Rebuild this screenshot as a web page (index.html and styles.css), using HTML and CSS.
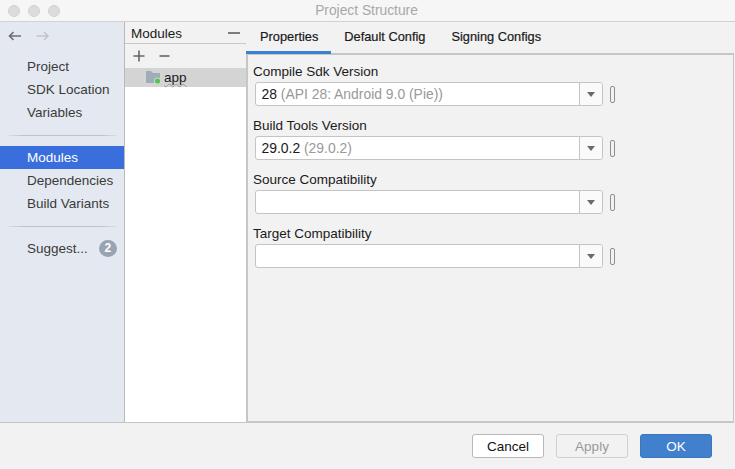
FILE: index.html
```html
<!DOCTYPE html>
<html>
<head>
<link rel="stylesheet" href="styles.css">
</head>
<body>

<div class="window">
    <div class="titlebar">
        <div class="lights"><span></span><span></span><span></span></div>
        <div class="title">Project Structure</div>
    </div>

    <div class="main">
        <div class="sidebar">
            <div class="nav-arrows">
                <svg width="14" height="12" viewBox="0 0 14 12"><path d="M13 6H1.500M5.500 2L1.500 6l4 4" fill="none" stroke="#6e6e6e" stroke-width="1.600"/></svg>
                <svg width="14" height="12" viewBox="0 0 14 12"><path d="M.5 6H12M8 2l4 4-4 4" fill="none" stroke="#c2c4c7" stroke-width="1.600"/></svg>
            </div>
            <div class="nav-item">Project</div>
            <div class="nav-item">SDK Location</div>
            <div class="nav-item">Variables</div>
            <div class="nav-sep"></div>
            <div class="nav-item selected">Modules</div>
            <div class="nav-item">Dependencies</div>
            <div class="nav-item">Build Variants</div>
            <div class="nav-sep"></div>
            <div class="nav-item suggest">Suggest...<span class="badge">2</span></div>
        </div>

        <div class="modules">
            <div class="modules-head">
                <span>Modules</span>
                <span class="minimize"></span>
            </div>
            <div class="modules-tools">
                <svg width="12" height="12" viewBox="0 0 12 12"><path d="M6 .5v11M.5 6h11" stroke="#666" stroke-width="1.600"/></svg>
                <svg width="11" height="12" viewBox="0 0 11 12"><path d="M.5 6h10" stroke="#666" stroke-width="1.600"/></svg>
            </div>
            <div class="module-row">
                <svg class="folder" width="15" height="13" viewBox="0 0 15 13">
                    <path d="M0 0h5l2 2h7v10H0z" fill="#9fadb8"/>
                    <circle cx="11.500" cy="10" r="3.500" fill="#d4d4d4"/>
                    <circle cx="11.500" cy="10" r="2.500" fill="#4fc64f"/>
                </svg>
                <span class="module-name">app</span>
            </div>
        </div>

        <div class="content">
            <div class="tabs">
                <div class="tab active">Properties</div>
                <div class="tab">Default Config</div>
                <div class="tab">Signing Configs</div>
            </div>
            <div class="panel">
                <div class="field">
                    <label>Compile Sdk Version</label>
                    <div class="combo-line">
                        <div class="combo">
                            <div class="combo-value">28 <span class="hint">(API 28: Android 9.0 (Pie))</span></div>
                            <div class="combo-arrow"><i></i></div>
                        </div>
                        <span class="pill"></span>
                    </div>
                </div>
                <div class="field">
                    <label>Build Tools Version</label>
                    <div class="combo-line">
                        <div class="combo">
                            <div class="combo-value">29.0.2 <span class="hint">(29.0.2)</span></div>
                            <div class="combo-arrow"><i></i></div>
                        </div>
                        <span class="pill"></span>
                    </div>
                </div>
                <div class="field">
                    <label>Source Compatibility</label>
                    <div class="combo-line">
                        <div class="combo">
                            <div class="combo-value"></div>
                            <div class="combo-arrow"><i></i></div>
                        </div>
                        <span class="pill"></span>
                    </div>
                </div>
                <div class="field">
                    <label>Target Compatibility</label>
                    <div class="combo-line">
                        <div class="combo">
                            <div class="combo-value"></div>
                            <div class="combo-arrow"><i></i></div>
                        </div>
                        <span class="pill"></span>
                    </div>
                </div>
            </div>
        </div>
    </div>

    <div class="footer">
        <button class="btn">Cancel</button>
        <button class="btn disabled">Apply</button>
        <button class="btn primary">OK</button>
    </div>
</div>

</body>
</html>
```

FILE: styles.css
```css
* {
    box-sizing: border-box;
}

html, body {
    margin: 0;
    height: 100%;
    overflow: hidden;
}

body {
    font-family: "Liberation Sans", Arial, sans-serif;
    font-size: 13.5px;
    color: #1a1a1a;
    background-color: #f2f2f2;
}

.window {
    display: flex;
    flex-direction: column;
    height: 469px;
}

.titlebar {
    display: flex;
    align-items: center;
    position: relative;
    height: 22px;
    background-color: #f6f6f6;
    border-bottom: 1px solid #d2d2d2;
    flex-shrink: 0;
}

.lights {
    display: flex;
    gap: 8px;
    padding-left: 8px;
}

.lights span {
    width: 12px;
    height: 12px;
    border-radius: 50%;
    background-color: #dcdcdc;
    border: 1px solid #d2d2d2;
}

.title {
    position: absolute;
    left: 0;
    right: 2px;
    font-size: 13.8px;
    text-align: center;
    color: #a8a8a8;
}

.main {
    display: flex;
    height: 401px;
}

/* left nav */
.sidebar {
    width: 125px;
    padding-top: 5px;
    background-color: #e4e9f1;
    border-right: 1px solid #b9b9b9;
    border-bottom: 1px solid #c4c4c4;
    color: #3a3a3a;
}

.nav-arrows {
    display: flex;
    gap: 14px;
    height: 28px;
    padding: 3px 0 0 8px;
}

.nav-item {
    height: 23px;
    line-height: 23px;
    padding-left: 27px;
}

.nav-item.selected {
    background-color: #3a6edc;
    color: #fff;
}

.nav-item.suggest {
    display: flex;
    align-items: center;
}

.nav-sep {
    height: 1px;
    margin: 11px 7px 10px;
    background: linear-gradient(to right, #dcdfe4, #c0c2c5 15%, #c0c2c5 85%, #dcdfe4);
}

.badge {
    width: 18px;
    height: 17px;
    margin-left: 11px;
    border-radius: 50%;
    background-color: #98a4b3;
    color: #fff;
    font-size: 12px;
    font-weight: bold;
    line-height: 17px;
    text-align: center;
}

/* modules list */
.modules {
    width: 121px;
    background-color: #fff;
    border-bottom: 1px solid #c4c4c4;
}

.modules-head {
    display: flex;
    align-items: center;
    justify-content: space-between;
    height: 22px;
    padding: 1px 6px 0;
    background-color: #f2f2f2;
    border-bottom: 1px solid #c9c9c9;
}

.minimize {
    width: 12px;
    height: 2px;
    background-color: #7d7d7d;
}

.modules-tools {
    display: flex;
    align-items: center;
    gap: 14px;
    height: 24px;
    padding-left: 8px;
    background-color: #f2f2f2;
}

.module-row {
    display: flex;
    align-items: center;
    height: 19px;
    padding-left: 21px;
    background-color: #d4d4d4;
}

.folder {
    margin-right: 3px;
}

.module-name {
    text-decoration: underline wavy #9a9a9a 1px;
    text-decoration-skip-ink: none;
}

/* right side */
.content {
    flex: 1;
    display: flex;
    flex-direction: column;
    padding-right: 1px;
}

.tabs {
    display: flex;
    height: 33px;
    border-bottom: 2px solid #c6c6c6;
    font-size: 12.800px;
}

.tab {
    height: 32px;
    padding: 0 13px;
    line-height: 30px;
    -webkit-text-stroke: 0.2px #1a1a1a;
}

.tab.active {
    padding-left: 14px;
    border-bottom: 3px solid #3d7fd0;
}

.panel {
    flex: 1;
    padding-top: 7px;
    border-left: 2px solid #c6c6c6;
    border-right: 1px solid #c6c6c6;
    border-bottom: 2px solid #c6c6c6;
}

.field {
    height: 54px;
    padding-left: 5px;
}

.field label {
    display: block;
    height: 20px;
    line-height: 19px;
}

.combo-line {
    display: flex;
    align-items: center;
    gap: 7px;
    padding-left: 2px;
}

.combo {
    display: flex;
    width: 348px;
    height: 24px;
    background-color: #fff;
    border: 1px solid #c4c4c4;
    border-radius: 3px;
    font-size: 13.900px;
}

.combo-value {
    flex: 1;
    padding-left: 5.500px;
    line-height: 22px;
}

.hint {
    color: #999;
}

.combo-arrow {
    display: flex;
    align-items: center;
    justify-content: center;
    width: 23px;
    background-color: #fafafa;
    border-left: 1px solid #c4c4c4;
    border-radius: 0 3px 3px 0;
}

.combo-arrow i {
    border-left: 4px solid transparent;
    border-right: 4px solid transparent;
    border-top: 5px solid #6a6a6a;
}

.pill {
    width: 5px;
    height: 17px;
    border: 1px solid #8e8e8e;
    border-radius: 2px;
}

/* bottom buttons */
.footer {
    flex: 1;
    display: flex;
    justify-content: flex-end;
    align-items: center;
    gap: 12px;
    padding-right: 23px;
}

.btn {
    width: 72px;
    height: 24px;
    padding: 0;
    font-family: inherit;
    font-size: 13.500px;
    color: #111;
    background-color: #fff;
    border: 1px solid #b8b8b8;
    border-radius: 3px;
}

.btn.disabled {
    color: #999;
    background-color: #f2f2f2;
    border-color: #d0d0d0;
}

.btn.primary {
    color: #fff;
    background-color: #4080cc;
    border-color: #3a75bd;
}
```
